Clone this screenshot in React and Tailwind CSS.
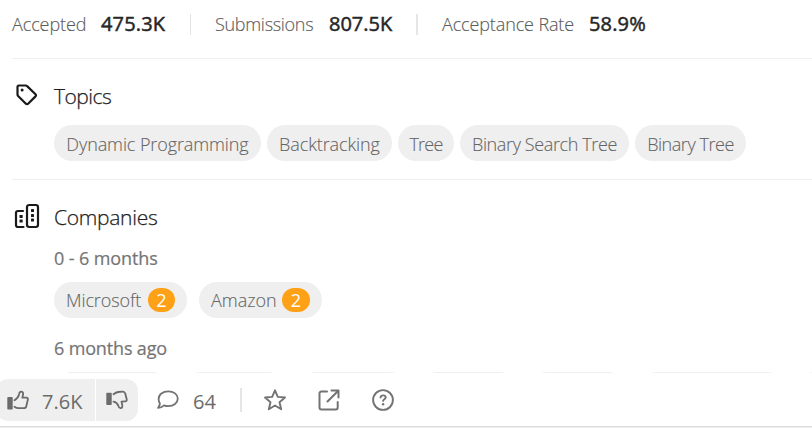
const topics = [
  { name: "Dynamic Programming", box: "w-[207px] tracking-[-0.1px]" },
  { name: "Backtracking", box: "w-[125px] tracking-[-0.1px]" },
  { name: "Tree", box: "w-[56px] tracking-[-0.8px]" },
  { name: "Binary Search Tree", box: "w-[169px] tracking-[-0.38px]" },
  { name: "Binary Tree", box: "w-[111px] tracking-[-0.45px]" },
];

const olderCompanies = ["w-[117px]", "w-[103px]", "w-[110px]", "w-[97px]", "w-[98px]", "w-[146px]", "w-[117px]"];

function Stat({ label, value, labelBox, valueBox }) {
  return (
    <div className="flex h-full items-center">
      <span className={`text-[18px] font-light text-[#5c5c5c] [-webkit-text-stroke:0.15px] ${labelBox}`}>{label}</span>
      <span className={`text-[20px] font-normal text-[#262626] [-webkit-text-stroke:0.5px] ${valueBox}`}>{value}</span>
    </div>
  );
}

function TagIcon() {
  return (
    <svg width="24" height="24" viewBox="0 0 24 24" fill="none" stroke="#1a1a1a" strokeWidth="2.200" strokeLinejoin="round">
      <path d="M3.900 2.500h6.800a2 2 0 0 1 1.400.6l8.400 8.100a1.500 1.500 0 0 1 0 2.200l-7.400 7.300a1.500 1.500 0 0 1-2.200 0L3.100 13a2 2 0 0 1-.6-1.400V3.900a1.400 1.400 0 0 1 1.400-1.400Z" />
      <circle cx="7.100" cy="7.100" r="1.500" fill="#1a1a1a" stroke="none" />
    </svg>
  );
}

function CompaniesIcon() {
  return (
    <svg width="26" height="26" viewBox="0 0 26 26" fill="none" stroke="#1a1a1a" strokeWidth="2.200" strokeLinecap="round">
      <rect x="13" y="2" width="11" height="22" rx="2.200" />
      <path d="M9 8H4a2 2 0 0 0-2 2v12a2 2 0 0 0 2 2h5.500" />
      <g fill="#1a1a1a" stroke="none">
        <rect x="17" y="6" width="3" height="3" rx="0.600" />
        <rect x="17" y="11" width="3" height="3" rx="0.600" />
        <rect x="17" y="15.500" width="3" height="3" rx="0.600" />
        <rect x="5.500" y="12" width="3.200" height="3" rx="0.600" />
        <rect x="5.500" y="16.500" width="3.200" height="3" rx="0.600" />
      </g>
    </svg>
  );
}

function ThumbUpIcon() {
  return (
    <svg width="22" height="20" viewBox="0 0 22 20" fill="none" stroke="#6b6b6b" strokeWidth="1.800" strokeLinejoin="round" strokeLinecap="round">
      <rect x="0.300" y="7" width="5.400" height="12.500" rx="0.800" fill="#6b6b6b" stroke="none" />
      <path d="M7.500 10.200c2.500-1.400 4-3.400 4.600-6 .3-1.600.9-2.600 2-2.600 1.700 0 2.300 1.500 1.900 3.100l-.7 3h4.200c1.100 0 1.600.9 1.300 2l-1.500 6.500c-.3 1.300-1.200 2-2.500 2h-5.300c-1.600 0-2.700-.5-4-1.500" />
    </svg>
  );
}

function ThumbDownIcon() {
  return (
    <svg width="22" height="20" viewBox="0 0 22 20" fill="none" stroke="#6b6b6b" strokeWidth="1.800" strokeLinejoin="round" strokeLinecap="round">
      <rect x="0.300" y="2.800" width="5.400" height="12.200" rx="0.800" fill="#6b6b6b" stroke="none" />
      <path d="M7.500 4.200c1.600-1.300 3-2 4.700-2.200l4.300-.4c1.500-.1 2.300.6 2.700 1.900l1.500 5.700c.3 1.200-.3 2.100-1.500 2.200l-3.700.3.800 3.600c.3 1.500-.3 2.700-1.600 2.900-1.200.1-1.900-.8-2.300-2.200-.7-2.300-2.300-3.800-4.900-4.300" />
    </svg>
  );
}

function CommentIcon() {
  return (
    <svg width="22" height="20" viewBox="0 0 22 20" fill="none" stroke="#737373" strokeWidth="1.800" strokeLinejoin="round">
      <path d="M11.300 1.300c5.400 0 9.500 3.100 9.500 7.300s-4.100 7.500-9.500 7.500c-1.600 0-3-.3-4.300-.8-1.700 1.600-3.700 2.500-5.900 2.600 1.100-1.400 1.700-2.800 1.800-4.500C2 12.100 1.600 10.500 1.600 8.900c0-4.400 4.200-7.600 9.700-7.600Z" />
    </svg>
  );
}

function StarIcon() {
  return (
    <svg width="24" height="24" viewBox="0 0 24 24" fill="none" stroke="#737373" strokeWidth="1.900" strokeLinejoin="round">
      <path d="m12 2.300 2.800 6.600 7.200.6-5.500 4.700 1.700 7.100L12 17.500l-6.200 3.800 1.700-7.100L2 9.500l7.200-.6Z" />
    </svg>
  );
}

function ShareIcon() {
  return (
    <svg width="24" height="24" viewBox="0 0 24 24" fill="none" stroke="#737373" strokeWidth="2" strokeLinejoin="round" strokeLinecap="round">
      <path d="M10 3.500H4.500A1.800 1.800 0 0 0 2.500 5.300v14.200a2 2 0 0 0 2 2h14.200a2 2 0 0 0 2-2V14" />
      <path d="M14.500 2.500h7v7M21 3 10.500 13.500" />
    </svg>
  );
}

function HelpIcon() {
  return (
    <svg width="24" height="24" viewBox="0 0 24 24" fill="none" stroke="#737373" strokeWidth="1.900" strokeLinecap="round">
      <circle cx="12" cy="12" r="9.900" />
      <path d="M9.500 9.500c.2-1.400 1.200-2.100 2.600-2.100s2.600.8 2.600 2c0 1.800-2.600 1.800-2.600 3.500" />
      <circle cx="12.100" cy="16.200" r="1.200" fill="#737373" stroke="none" />
    </svg>
  );
}

function Company({ name, box, nameBox, badge }) {
  return (
    <div className={`flex h-9 items-center rounded-full bg-[#efefef] pl-3 ${box}`}>
      <span className={`text-[18px] font-light text-[#646464] [-webkit-text-stroke:0.1px] ${nameBox}`}>{name}</span>
      <span className={`flex h-6 items-center justify-center rounded-full bg-[#ffa116] text-[18px] text-white ${badge}`}>2</span>
    </div>
  );
}

export default function App() {
  return (
    <div className="flex h-[428px] w-[812px] flex-col overflow-hidden bg-white font-['Open_Sans',sans-serif] whitespace-nowrap">
      <div className="ml-3 flex h-[59px] items-start border-b border-[#efefef]">
        <div className="flex h-[48px] items-center">
          <Stat label="Accepted" value="475.3K" labelBox="w-[89px] tracking-[-0.1px]" valueBox="w-[89px] tracking-[0.15px]" />
          <div className="h-[21px] w-px bg-[#e3e3e3]" />
          <div className="w-6" />
          <Stat label="Submissions" value="807.5K" labelBox="w-[114px] tracking-[-0.3px]" valueBox="w-[87px]" />
          <div className="h-[21px] w-[2px] bg-[#e6e6e6]" />
          <div className="w-6" />
          <Stat label="Acceptance Rate" value="58.9%" labelBox="w-[147px] tracking-[-0.13px]" valueBox="w-[60px] tracking-[0.15px]" />
        </div>
      </div>

      <div className="ml-3 h-[121px] border-b border-[#efefef]">
        <div className="flex h-[66px] items-center pt-[9px] pl-[3px]">
          <div className="mt-[-3px] w-[39px]"><TagIcon /></div>
          <h2 className="text-[21px] font-light tracking-[-0.5px] text-[#222] [-webkit-text-stroke:0.25px]">Topics</h2>
        </div>
        <div className="flex gap-1.5 pl-[42px]">
          {topics.map((t) => (
            <span key={t.name} className={`flex h-9 items-center justify-center rounded-full bg-[#efefef] pt-[2px] text-[18px] font-light text-[#646464] [-webkit-text-stroke:0.1px] ${t.box}`}>
              {t.name}
            </span>
          ))}
        </div>
      </div>

      <div className="h-[193px] overflow-hidden">
        <div className="flex h-[66px] items-center pt-[9px] pl-[14px]">
          <div className="mt-[-4px] w-10"><CompaniesIcon /></div>
          <h2 className="text-[21px] font-light tracking-[-0.28px] text-[#222] [-webkit-text-stroke:0.25px]">Companies</h2>
        </div>
        <div className="flex flex-col pl-[54px]">
          <h3 className="h-9 text-[18px] leading-[24px] font-normal tracking-[-0.1px] text-[#757575] [-webkit-text-stroke:0.2px]">0 - 6 months</h3>
          <div className="flex gap-3">
            <Company name="Microsoft" box="w-[133px]" nameBox="w-[82px] tracking-[-0.1px]" badge="w-[27px]" />
            <Company name="Amazon" box="w-[123px]" nameBox="w-[71px]" badge="w-[28px]" />
          </div>
          <h3 className="h-[54px] pt-[18px] text-[18px] leading-[24px] font-normal tracking-[-0.15px] text-[#757575] [-webkit-text-stroke:0.2px]">6 months ago</h3>
          <div className="flex gap-3">
            {olderCompanies.map((w, i) => (
              <div key={i} className={`h-9 shrink-0 rounded-full bg-[#efefef] ${w}`} />
            ))}
          </div>
        </div>
      </div>

      <div className="flex h-[53px] items-center pt-px text-[20px] text-[#6b6b6b]">
        <div className="-ml-1 flex h-[42px] gap-px">
          <div className="flex w-[99px] items-center rounded-l-xl bg-[#efefef] pl-[11px]">
            <ThumbUpIcon />
            <span className="pt-[3px] pl-[13px]">7.6K</span>
          </div>
          <div className="flex w-[42px] items-center rounded-r-xl bg-[#efefef] pl-[10px]">
            <ThumbDownIcon />
          </div>
        </div>
        <div className="flex items-center gap-[14px] pl-[19px]">
          <CommentIcon />
          <span className="w-[47px] pt-[3px]">64</span>
        </div>
        <div className="h-6 w-[2px] bg-[#e6e6e6]" />
        <div className="flex gap-[30px] pl-[21px]">
          <StarIcon />
          <ShareIcon />
          <HelpIcon />
        </div>
      </div>
      <div className="h-px bg-[#dcdcdc]" />
      <div className="h-px bg-[#efefef]" />
    </div>
  );
}
